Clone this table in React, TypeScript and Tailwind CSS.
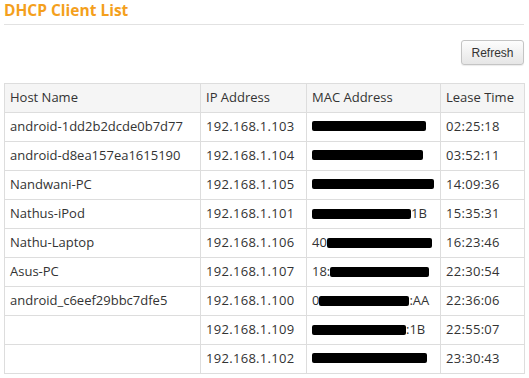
import React from "react";

type Mac = { pre?: string; bar: number; post?: string };

type Client = {
  host: string;
  ip: string;
  mac: Mac;
  lease: string;
};

const clients: Client[] = [
  { host: "android-1dd2b2dcde0b7d77", ip: "192.168.1.103", mac: { bar: 114 }, lease: "02:25:18" },
  { host: "android-d8ea157ea1615190", ip: "192.168.1.104", mac: { bar: 111 }, lease: "03:52:11" },
  { host: "Nandwani-PC", ip: "192.168.1.105", mac: { bar: 122 }, lease: "14:09:36" },
  { host: "Nathus-iPod", ip: "192.168.1.101", mac: { bar: 99, post: "1B" }, lease: "15:35:31" },
  { host: "Nathu-Laptop", ip: "192.168.1.106", mac: { pre: "40", bar: 105 }, lease: "16:23:46" },
  { host: "Asus-PC", ip: "192.168.1.107", mac: { pre: "18:", bar: 99 }, lease: "22:30:54" },
  { host: "android_c6eef29bbc7dfe5", ip: "192.168.1.100", mac: { pre: "0", bar: 90, post: ":AA" }, lease: "22:36:06" },
  { host: "", ip: "192.168.1.109", mac: { bar: 94, post: ":1B" }, lease: "22:55:07" },
  { host: "", ip: "192.168.1.102", mac: { bar: 115 }, lease: "23:30:43" },
];

function MacCell({ mac }: { mac: Mac }) {
  return (
    <span className="inline-flex items-center">
      {mac.pre && <span>{mac.pre}</span>}
      <span
        className="inline-block h-[10px] rounded-[2px] bg-black"
        style={{ width: mac.bar }}
      />
      {mac.post && <span>{mac.post}</span>}
    </span>
  );
}

export default function App() {
  return (
    <div className="h-[378px] w-[529px] overflow-hidden bg-white px-1 font-['Open_Sans',sans-serif] text-[13px] text-[#333]">
      <h2 className="text-[15.5px] font-bold leading-[20px] text-[#f4a01c]">
        DHCP Client List
      </h2>
      <div className="mt-[4px] mr-[1px] border-t border-[#e2e2e2]" />

      <div className="mt-[15px] flex justify-end pr-[1px]">
        <button className="h-[25px] w-[63px] rounded-[3px] border border-[#c4c4c4] bg-gradient-to-b from-[#fdfdfd] to-[#e6e6e6] font-['Liberation_Sans',sans-serif] text-[12px] text-[#333] shadow-[0_1px_1px_rgba(0,0,0,0.08)]">
          Refresh
        </button>
      </div>

      <table className="mt-[18px] w-[520px] table-fixed border-collapse border border-[#ddd]">
        <colgroup>
          <col className="w-[196px]" />
          <col className="w-[106px]" />
          <col className="w-[134px]" />
          <col className="w-[84px]" />
        </colgroup>
        <thead>
          <tr className="h-[29px] bg-[#f5f5f5] text-left">
            <th className="border border-[#ddd] px-[5px] font-normal">Host Name</th>
            <th className="border border-[#ddd] px-[5px] font-normal">IP Address</th>
            <th className="border border-[#ddd] px-[5px] font-normal">MAC Address</th>
            <th className="border border-[#ddd] px-[5px] font-normal">Lease Time</th>
          </tr>
        </thead>
        <tbody>
          {clients.map((c) => (
            <tr key={c.ip} className="h-[29px]">
              <td className="border border-[#ddd] px-[5px] whitespace-nowrap">{c.host}</td>
              <td className="border border-[#ddd] px-[5px] whitespace-nowrap tracking-[0.3px]">{c.ip}</td>
              <td className="border border-[#ddd] px-[5px] whitespace-nowrap">
                <MacCell mac={c.mac} />
              </td>
              <td className="border border-[#ddd] px-[5px] whitespace-nowrap tracking-[0.3px]">{c.lease}</td>
            </tr>
          ))}
        </tbody>
      </table>
    </div>
  );
}
